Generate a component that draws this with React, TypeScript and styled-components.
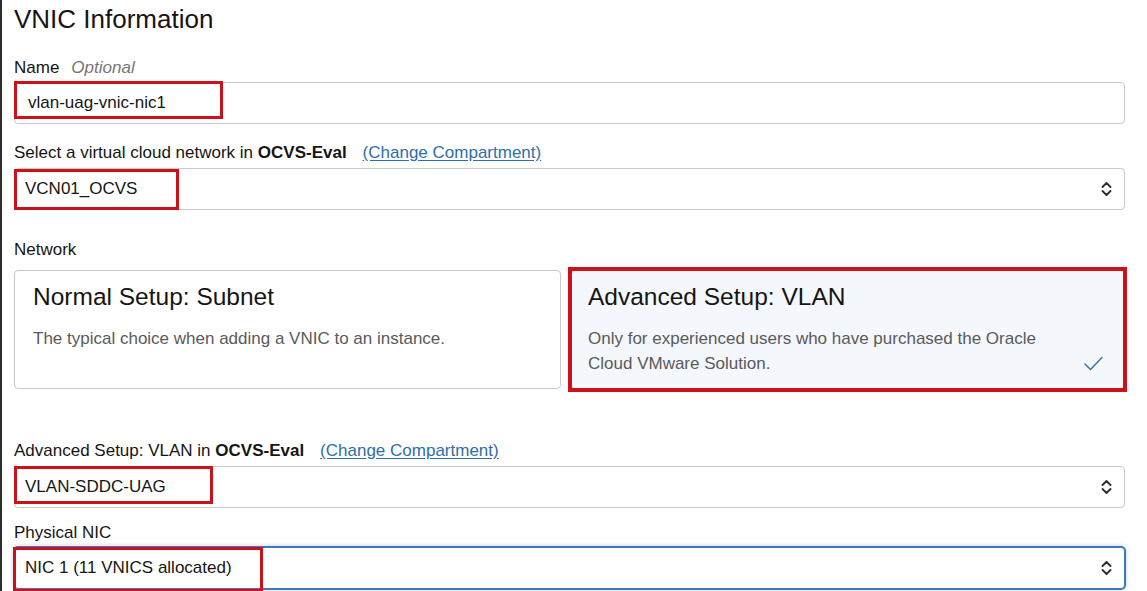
import React from "react";
import styled, { createGlobalStyle, css } from "styled-components";

const GlobalStyle = createGlobalStyle`
  html, body {
    margin: 0;
    padding: 0;
    background: #ffffff;
  }
  body {
    font-family: "Liberation Sans", Arial, sans-serif;
    color: #161513;
  }
`;

const Page = styled.div`
  min-height: 100vh;
  box-sizing: border-box;
  border-left: 2px solid #2e2e2e;
  padding: 4px 0 0 12px;
`;

const Form = styled.div`
  width: 1111px;
  display: flex;
  flex-direction: column;
`;

const Title = styled.h2`
  margin: 0;
  font-size: 26px;
  line-height: 30px;
  font-weight: 400;
`;

const Section = styled.div<{ $top: number }>`
  margin-top: ${(p) => p.$top}px;
  display: flex;
  flex-direction: column;
`;

const LabelRow = styled.div<{ $gap?: number; $bottom?: number }>`
  display: flex;
  align-items: baseline;
  gap: ${(p) => p.$gap ?? 16}px;
  font-size: 17px;
  line-height: 20px;
  margin-bottom: ${(p) => p.$bottom ?? 4}px;
`;

const Optional = styled.span`
  font-style: italic;
  color: #767676;
`;

const Strong = styled.b`
  font-weight: 700;
`;

const Link = styled.a`
  color: #2f6ea8;
  text-decoration: underline;
  text-underline-offset: 2px;
  cursor: pointer;
`;

const Field = styled.div<{ $select?: boolean; $focused?: boolean }>`
  position: relative;
  box-sizing: border-box;
  height: 42px;
  display: flex;
  align-items: center;
  padding-left: ${(p) => (p.$select ? 10 : 13)}px;
  border: 1px solid #c9c9c9;
  border-radius: 4px;
  background: #ffffff;
  font-size: 17px;
  ${(p) =>
    p.$focused &&
    css`
      border-color: #3f77b9;
      box-shadow: 0 0 0 1px #3f77b9, 0 0 4px 1px rgba(63, 119, 185, 0.35);
    `}
`;

const Chevron = styled.svg`
  position: absolute;
  right: 12px;
  top: 50%;
  transform: translateY(-50%);
`;

const Annotation = styled.div<{ $top: number; $left: number; $w: number; $h: number }>`
  position: absolute;
  top: ${(p) => p.$top}px;
  left: ${(p) => p.$left}px;
  width: ${(p) => p.$w}px;
  height: ${(p) => p.$h}px;
  box-sizing: border-box;
  border: 3px solid #cc1218;
  pointer-events: none;
`;

const CardAnnotation = styled.div`
  position: absolute;
  inset: -4px -3px -4px -4px;
  border: 4px solid #cc1218;
  pointer-events: none;
`;

const Cards = styled.div`
  display: grid;
  grid-template-columns: 547px 1fr;
  gap: 10px;
`;

const Card = styled.div<{ $selected?: boolean }>`
  position: relative;
  box-sizing: border-box;
  height: 119px;
  padding: 12px 56px 13px ${(p) => (p.$selected ? 16 : 18)}px;
  border: 1px solid ${(p) => (p.$selected ? "#b9c8d8" : "#c9c9c9")};
  border-radius: 4px;
  background: ${(p) => (p.$selected ? "#f4f7fb" : "#ffffff")};
`;

const CardTitle = styled.h3`
  margin: 0 0 15px;
  font-size: 24.5px;
  line-height: 28px;
  font-weight: 400;
  color: #161513;
`;

const CardText = styled.p`
  margin: 0;
  font-size: 17px;
  line-height: 25px;
  color: #5a5a5a;
`;

const Check = styled.svg`
  position: absolute;
  right: 21px;
  bottom: 17px;
`;

const SelectChevron = () => (
  <Chevron width="11" height="17" viewBox="0 0 11 17" fill="none">
    <polyline points="1.5,6.5 5.5,2.5 9.5,6.5" stroke="#2f2f2f" strokeWidth="1.9" strokeLinecap="round" strokeLinejoin="round" />
    <polyline points="1.5,10.5 5.5,14.5 9.5,10.5" stroke="#2f2f2f" strokeWidth="1.9" strokeLinecap="round" strokeLinejoin="round" />
  </Chevron>
);

export default function App() {
  return (
    <>
      <GlobalStyle />
      <Page>
        <Form>
          <Title>VNIC Information</Title>

          <Section $top={24}>
            <LabelRow $gap={12}>
              <span>Name</span>
              <Optional>Optional</Optional>
            </LabelRow>
            <Field>
              vlan-uag-vnic-nic1
              <Annotation $top={-2} $left={-1} $w={209} $h={38} />
            </Field>
          </Section>

          <Section $top={19}>
            <LabelRow $bottom={5}>
              <span>
                Select a virtual cloud network in <Strong>OCVS-Eval</Strong>
              </span>
              <Link>(Change Compartment)</Link>
            </LabelRow>
            <Field $select>
              VCN01_OCVS
              <SelectChevron />
              <Annotation $top={0} $left={-1} $w={165} $h={41} />
            </Field>
          </Section>

          <Section $top={30}>
            <LabelRow $bottom={10}>
              <span>Network</span>
            </LabelRow>
            <Cards>
              <Card>
                <CardTitle>Normal Setup: Subnet</CardTitle>
                <CardText>The typical choice when adding a VNIC to an instance.</CardText>
              </Card>
              <Card $selected>
                <CardTitle>Advanced Setup: VLAN</CardTitle>
                <CardText>
                  Only for experienced users who have purchased the Oracle Cloud VMware Solution.
                </CardText>
                <Check width="19" height="15" viewBox="0 0 19 15" fill="none">
                  <polyline points="1,8 6.5,13.5 18,1.5" stroke="#3f72a3" strokeWidth="1.5" strokeLinecap="round" strokeLinejoin="round" />
                </Check>
                <CardAnnotation />
              </Card>
            </Cards>
          </Section>

          <Section $top={52}>
            <LabelRow $bottom={5}>
              <span>
                Advanced Setup: VLAN in <Strong>OCVS-Eval</Strong>
              </span>
              <Link>(Change Compartment)</Link>
            </LabelRow>
            <Field $select>
              VLAN-SDDC-UAG
              <SelectChevron />
              <Annotation $top={-1} $left={-1} $w={199} $h={38} />
            </Field>
          </Section>

          <Section $top={15}>
            <LabelRow>
              <span>Physical NIC</span>
            </LabelRow>
            <Field $select $focused>
              NIC 1 (11 VNICS allocated)
              <SelectChevron />
              <Annotation $top={-1} $left={-2} $w={250} $h={45} />
            </Field>
          </Section>
        </Form>
      </Page>
    </>
  );
}
